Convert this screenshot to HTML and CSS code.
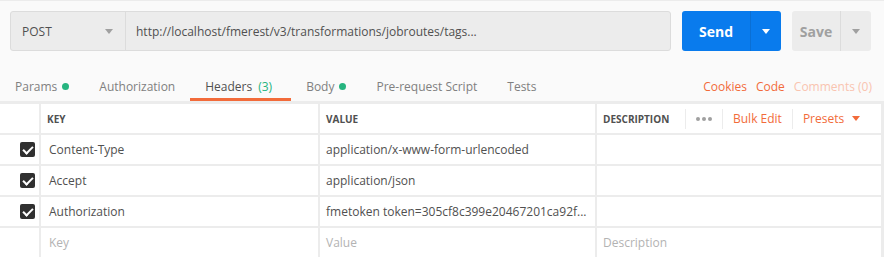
FILE: index.html
```html
<!DOCTYPE html>
<html lang="en">
<head>
  <meta charset="UTF-8">
  <title>Request Builder</title>
  <link rel="stylesheet" href="styles.css">
</head>
<body>
  <div class="request-bar">
    <div class="url-group">
      <div class="method">
        <span>POST</span>
        <span class="caret grey"></span>
      </div>
      <div class="url">http://localhost/fmerest/v3/transformations/jobroutes/tags...</div>
    </div>
    <div class="split-btn send">
      <span class="label">Send</span>
      <span class="arrow"><span class="caret white"></span></span>
    </div>
    <div class="split-btn save">
      <span class="label">Save</span>
      <span class="arrow"><span class="caret grey"></span></span>
    </div>
  </div>

  <div class="tabs">
    <div class="tab">Params <span class="dot"></span></div>
    <div class="tab">Authorization</div>
    <div class="tab active">Headers <span class="count">(3)</span></div>
    <div class="tab">Body <span class="dot"></span></div>
    <div class="tab">Pre-request Script</div>
    <div class="tab">Tests</div>
    <div class="tab-links">
      <span class="link">Cookies</span>
      <span class="link">Code</span>
      <span class="link faded">Comments (0)</span>
    </div>
  </div>

  <div class="table">
    <div class="cell"></div>
    <div class="cell head">KEY</div>
    <div class="cell head">VALUE</div>
    <div class="cell head desc-head">
      <span class="desc-title">DESCRIPTION</span>
      <span class="tool dots"><i></i><i></i><i></i></span>
      <span class="tool">Bulk Edit</span>
      <span class="tool">Presets <span class="caret orange"></span></span>
    </div>

    <div class="cell check-cell"><span class="check"></span></div>
    <div class="cell key">Content-Type</div>
    <div class="cell">application/x-www-form-urlencoded</div>
    <div class="cell"></div>

    <div class="cell check-cell"><span class="check"></span></div>
    <div class="cell key">Accept</div>
    <div class="cell">application/json</div>
    <div class="cell"></div>

    <div class="cell check-cell"><span class="check"></span></div>
    <div class="cell key">Authorization</div>
    <div class="cell">fmetoken token=305cf8c399e20467201ca92f...</div>
    <div class="cell"></div>

    <div class="cell"></div>
    <div class="cell key placeholder">Key</div>
    <div class="cell placeholder">Value</div>
    <div class="cell placeholder">Description</div>
  </div>
</body>
</html>
```

FILE: styles.css
```css
* {
  box-sizing: border-box;
}

body {
  margin: 0;
  font-family: 'Open Sans', sans-serif;
  font-size: 12px;
  color: #505050;
  background: #fafafa;
  border-top: 1px solid #ececec;
}

/* request bar */
.request-bar {
  display: flex;
  align-items: center;
  gap: 11px;
  padding: 10px 13px 0 10px;
  height: 50px;
}

.url-group {
  display: flex;
  width: 661px;
  height: 40px;
  background: #ececec;
  border: 1px solid #dcdcdc;
  border-radius: 3px;
}

.method {
  width: 115px;
  display: flex;
  align-items: center;
  justify-content: space-between;
  padding: 0 12px 0 11px;
  border-right: 1px solid #dcdcdc;
  color: #505050;
  font-size: 12px;
}

.url {
  flex: 1;
  display: flex;
  align-items: center;
  padding-left: 10px;
  color: #505050;
}

.caret {
  display: inline-block;
  width: 0;
  height: 0;
  border-left: 4px solid transparent;
  border-right: 4px solid transparent;
  border-top: 5px solid #a0a0a0;
}

.caret.white { border-top-color: #fff; }
.caret.orange { border-top-color: #f26b3a; }

.split-btn {
  display: flex;
  height: 40px;
  border-radius: 3px;
  font-size: 14px;
  font-weight: bold;
}

.split-btn .label {
  display: flex;
  align-items: center;
  justify-content: center;
}

.split-btn .arrow {
  display: flex;
  align-items: center;
  justify-content: center;
  width: 30px;
}

.send {
  width: 99px;
  background: #097bed;
  color: #fff;
}

.send .label {
  width: 69px;
  border-right: 1px solid #0a6fd4;
}

.save {
  width: 79px;
  background: #ececec;
  color: #a0a0a0;
}

.save .label {
  width: 49px;
  border-right: 1px solid #dcdcdc;
}

/* tabs */
.tabs {
  display: flex;
  align-items: stretch;
  height: 51px;
  padding-top: 23px;
  border-bottom: 1px solid #ececec;
}

.tab {
  display: flex;
  align-items: center;
  padding: 0 15px;
  font-size: 12px;
  color: #808080;
  border-bottom: 3px solid transparent;
}

.tab.active {
  color: #505050;
  border-bottom-color: #f26b3a;
}

.count {
  color: #26b47f;
  margin-left: 6px;
  margin-right: 4px;
}

.dot {
  width: 7px;
  height: 7px;
  border-radius: 50%;
  background: #26b47f;
  margin-left: 5px;
}

.tab-links {
  margin-left: auto;
  display: flex;
  align-items: center;
  gap: 9px;
  padding-right: 12px;
  padding-bottom: 3px;
  font-size: 12px;
}

.link {
  color: #f26b3a;
}

.link.faded {
  color: #f9c4b0;
}

/* header table */
.table {
  display: grid;
  grid-template-columns: 39px 277px 275px 1fr;
  grid-auto-rows: 29px;
  gap: 2px;
  padding: 2px 3px 3px 0;
  background: #ececec;
}

.cell {
  background: #fff;
  display: flex;
  align-items: center;
  padding-left: 6px;
  color: #505050;
  white-space: nowrap;
  overflow: hidden;
}

.cell.key {
  padding-left: 8px;
}

.head {
  font-size: 10px;
  font-weight: bold;
  color: #505050;
}

.desc-title {
  width: 82px;
}

.tool {
  display: flex;
  align-items: center;
  gap: 8px;
  height: 20px;
  padding: 0 10px;
  border-left: 1px solid #ececec;
  font-size: 12px;
  font-weight: normal;
  color: #f26b3a;
}

.tool.dots {
  gap: 2px;
}

.tool.dots i {
  width: 4px;
  height: 4px;
  border-radius: 50%;
  background: #a0a0a0;
}

.check-cell {
  justify-content: flex-end;
  padding-right: 4px;
}

.check {
  position: relative;
  width: 15px;
  height: 15px;
  border-radius: 2px;
  background: #303030;
}

.check::after {
  content: '';
  position: absolute;
  left: 5px;
  top: 2px;
  width: 4px;
  height: 8px;
  border-right: 2px solid #fff;
  border-bottom: 2px solid #fff;
  transform: rotate(45deg);
}

.placeholder {
  color: #b3b3b3;
}
```
